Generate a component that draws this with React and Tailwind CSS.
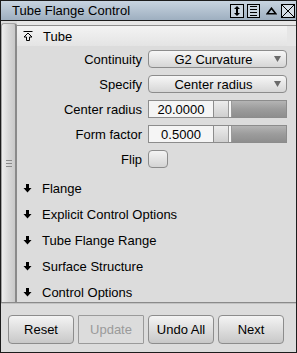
import React from 'react'

function UpArrowIcon() {
  return (
    <svg width="10" height="10" viewBox="0 0 10 10" className="shrink-0">
      <line x1="0.5" y1="0.5" x2="9.5" y2="0.5" stroke="#000" strokeWidth="1" />
      <polygon points="5,2 9,6 6.5,6 6.5,9.5 3.5,9.5 3.5,6 1,6" fill="none" stroke="#000" strokeWidth="1" />
    </svg>
  )
}

function DownArrowIcon() {
  return (
    <svg width="9" height="9" viewBox="0 0 9 9" className="shrink-0">
      <polygon points="3,0 6,0 6,4 8.5,4 4.5,8.5 0.5,4 3,4" fill="#000" />
    </svg>
  )
}

function TitleIcons() {
  return (
    <div className="flex items-center">
      <div className="w-[14px] h-[14px] border border-black bg-[#c9d4df] flex items-center justify-center">
        <svg width="8" height="10" viewBox="0 0 8 10">
          <polygon points="4,0 7,3 5,3 5,7 7,7 4,10 1,7 3,7 3,3 1,3" fill="#000" />
        </svg>
      </div>
      <div className="ml-[3px] w-[13px] h-[14px] border border-black bg-[#c9d4df] flex flex-col justify-center gap-[2px] px-[2px]">
        <div className="h-[1px] bg-black" />
        <div className="h-[1px] bg-black" />
        <div className="h-[1px] bg-black" />
        <div className="h-[1px] bg-black" />
      </div>
      <div className="ml-[6px] w-[11px] h-[14px] flex items-center justify-center">
        <svg width="11" height="8" viewBox="0 0 11 8">
          <polygon points="5.5,1.2 9.8,6.8 1.2,6.8" fill="none" stroke="#000" strokeWidth="1.6" />
        </svg>
      </div>
      <div className="ml-[4px] w-[14px] h-[14px] border border-black bg-[#d4dde6]">
        <svg width="12" height="12" viewBox="0 0 12 12">
          <line x1="0" y1="0" x2="12" y2="12" stroke="#000" strokeWidth="1" />
          <line x1="12" y1="0" x2="0" y2="12" stroke="#000" strokeWidth="1" />
        </svg>
      </div>
    </div>
  )
}

function Dropdown({ value }) {
  return (
    <div className="h-[18px] rounded-[4px] border border-[#8c8c8c] bg-linear-to-b from-[#f7f7f7] to-[#d6d6d6] flex items-center">
      <span className="flex-1 text-center pl-[4px]">{value}</span>
      <svg width="7" height="6" viewBox="0 0 7 6" className="mr-[5px]">
        <polygon points="0,0 7,0 3.5,6" fill="#6a6a6a" />
      </svg>
    </div>
  )
}

function SliderField({ value }) {
  return (
    <div className="flex h-[18px]">
      <div className="w-[66px] border border-[#8c8c8c] bg-[#f5f5f5] flex items-center justify-center">
        {value}
      </div>
      <div className="flex-1 flex border border-l-0 border-[#8c8c8c]">
        <div className="w-[14px] bg-linear-to-b from-[#ececec] to-[#cfcfcf]" />
        <div className="w-[4px] border-x border-[#9a9a9a] bg-[#f8f8f8]" />
        <div className="flex-1 bg-linear-to-b from-[#b4b4b4] via-[#9c9c9c] to-[#8e8e8e]" />
      </div>
    </div>
  )
}

export default function App() {
  const rows = [
    { label: 'Continuity', widget: <Dropdown value="G2 Curvature" /> },
    { label: 'Specify', widget: <Dropdown value="Center radius" /> },
    { label: 'Center radius', widget: <SliderField value="20.0000" /> },
    { label: 'Form factor', widget: <SliderField value="0.5000" /> },
    {
      label: 'Flip',
      widget: <div className="w-[20px] h-[18px] rounded-[4px] border border-[#8c8c8c] bg-linear-to-b from-[#f4f4f4] to-[#d4d4d4]" />
    }
  ]

  const sections = ['Flange', 'Explicit Control Options', 'Tube Flange Range', 'Surface Structure', 'Control Options']
  const buttons = ['Reset', 'Update', 'Undo All', 'Next']

  return (
    <div className="w-[297px] h-[353px] border border-[#1c1c1c] bg-[#dcdcdc] flex flex-col text-[13px] text-black font-['Liberation_Sans',Arial,sans-serif] leading-none overflow-hidden">
      {/* Title bar */}
      <div className="h-[20px] shrink-0 flex items-center justify-between border-b border-[#1c1c1c] bg-linear-to-b from-[#c8d4e0] to-[#9eafc0] pl-[11px] pr-[1px]">
        <span className="text-[13px]">Tube Flange Control</span>
        <TitleIcons />
      </div>

      {/* Main */}
      <div className="h-[281px] shrink-0 flex">
        <div className="w-[16px] shrink-0 mt-[2px] rounded-t-[3px] border-l border-t border-[#a4a4a4] border-r-2 border-r-[#8a8a8a] bg-linear-to-r from-[#ededed] via-[#d8d8d8] to-[#c9c9c9] flex items-center justify-center">
          <div className="flex flex-col gap-[2px] w-[6px]">
            <div className="h-[1px] bg-[#8a8a8a]" />
            <div className="h-[1px] bg-[#8a8a8a]" />
            <div className="h-[1px] bg-[#8a8a8a]" />
          </div>
        </div>

        <div className="flex-1 flex flex-col overflow-hidden">
          <div className="pt-[4px] bg-[#e6e6e6]">
            <div className="border-t border-[#8e8e8e]">
              <div className="mr-[9px] h-[20px] flex items-center pl-[6px] gap-[10px] bg-linear-to-b from-[#f3f3f3] to-[#e4e4e4]">
                <UpArrowIcon />
                <span>Tube</span>
              </div>
            </div>
          </div>

          <div className="mt-[4px] mr-[9px] grid grid-cols-[125px_1fr] gap-x-[6px] gap-y-[7px] items-center">
            {rows.map((r) => (
              <React.Fragment key={r.label}>
                <div className="text-right">{r.label}</div>
                <div>{r.widget}</div>
              </React.Fragment>
            ))}
          </div>

          <div className="mt-[11px] flex flex-col gap-[8px]">
            {sections.map((s) => (
              <div key={s} className="h-[18px] flex items-center pl-[6px] gap-[10px]">
                <DownArrowIcon />
                <span>{s}</span>
              </div>
            ))}
          </div>
        </div>
      </div>

      {/* Separator */}
      <div className="h-[2px] shrink-0 border-t border-[#8a8a8a] border-b border-b-[#c2c2c2]" />

      {/* Footer */}
      <div className="flex-1 flex gap-[4px] pl-[7px] pt-[11px]">
        {buttons.map((b) =>
          b === 'Update' ? (
            <div key={b} className="w-[66px] h-[29px] rounded-[1px] border border-[#9a9a9a] bg-[#dcdcdc] text-[#9a9a9a] flex items-center justify-center">
              {b}
            </div>
          ) : (
            <div key={b} className="w-[66px] h-[29px] rounded-[4px] border border-[#8c8c8c] bg-linear-to-b from-[#f4f4f4] to-[#c8c8c8] flex items-center justify-center">
              {b}
            </div>
          )
        )}
      </div>
    </div>
  )
}
